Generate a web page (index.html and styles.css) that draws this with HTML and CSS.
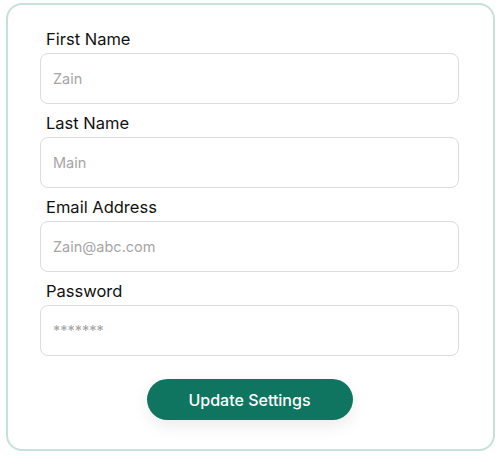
FILE: index.html
```html
<!DOCTYPE html>
<html lang="en">
<head>
<meta charset="utf-8">
<title>Settings</title>
<link rel="stylesheet" href="styles.css">
</head>
<body>
<form class="card">
  <div class="field">
    <label class="label" for="fn">First Name</label>
    <input class="input" id="fn" type="text" placeholder="Zain">
  </div>
  <div class="field">
    <label class="label" for="ln">Last Name</label>
    <input class="input" id="ln" type="text" placeholder="Main">
  </div>
  <div class="field">
    <label class="label" for="em">Email Address</label>
    <input class="input" id="em" type="email" placeholder="Zain@abc.com">
  </div>
  <div class="field">
    <label class="label" for="pw">Password</label>
    <input class="input" id="pw" type="text" placeholder="*******">
  </div>
  <div class="actions">
    <button class="btn" type="button">Update Settings</button>
  </div>
</form>
</body>
</html>
```
FILE: styles.css
```css
* { box-sizing: border-box; }
html, body { margin: 0; padding: 0; background: #ffffff; }
body {
  font-family: "Inter", "Lato", sans-serif;
  color: #111111;
  padding: 3px 0 0 6px;
}
.card {
  width: 489px;
  height: 448px;
  border: 2px solid #c6e1db;
  border-radius: 16px;
  padding: 19px 34px 0 32px;
  display: flex;
  flex-direction: column;
}
.field {
  display: flex;
  flex-direction: column;
  margin-bottom: 4px;
}
.label {
  font-size: 16.5px;
  line-height: 24px;
  margin: 3px 0 2px 6px;
  color: #111;
}
.input {
  height: 51px;
  width: 100%;
  border: 1px solid #dcdcdc;
  border-radius: 8px;
  padding: 0 12px;
  font-family: inherit;
  font-size: 14.5px;
  color: #333;
  outline: none;
  background: #fff;
}
.input::placeholder { color: #a6a6a6; }
.actions {
  display: flex;
  justify-content: center;
  margin-top: 19px;
}
.btn {
  width: 206px;
  height: 41px;
  border: none;
  border-radius: 21px;
  background: #0f7561;
  color: #ffffff;
  font-family: inherit;
  font-size: 16px;
  font-weight: 500;
  box-shadow: 0 6px 16px rgba(0,0,0,0.08);
}
```
